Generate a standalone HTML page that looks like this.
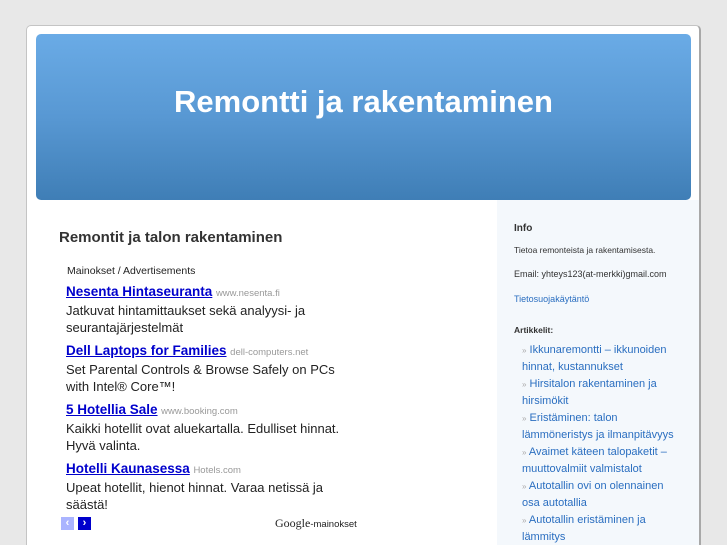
<!DOCTYPE html>
<html><head><meta charset="utf-8"><style>
*{margin:0;padding:0;box-sizing:border-box}
html{width:727px;height:545px;overflow:hidden}
body{width:727px;height:545px;background:#e8e8e8;font-family:"Liberation Sans",sans-serif;overflow:hidden;position:relative}
#wrap{position:absolute;left:26px;top:25px;width:675px;height:520px;background:#fff;border:1px solid #c4c4c4;border-bottom:none;border-right:2px solid #a8a8a8;border-radius:5px 5px 0 0}
#hdr{position:absolute;left:36px;top:34px;width:655px;height:166px;border-radius:5px;background:linear-gradient(#6aabe6,#5898d3 50%,#3f7eb6);color:#fff;text-align:center;font-size:31px;font-weight:bold;line-height:34px}
#hdr span{position:absolute;left:0;right:0;top:51px}
#side{position:absolute;left:497px;top:200px;width:202px;height:345px;background:#f4f8fc}
h2{position:absolute;left:59px;top:229px;font-size:15px;color:#333;font-weight:bold}
.ad{position:absolute;left:66px;width:288px;font-size:13px;line-height:17px;color:#222}
.ad a{color:#00c;font-weight:bold;text-decoration:underline;font-size:13.5px}
.ad small{color:#999;font-size:9.5px;font-weight:normal}
.s{position:absolute;left:514px;font-size:9px;color:#333}
.lst{position:absolute;left:522px;top:342px;width:156px;font-size:11px;line-height:17px;color:#2a6ec0}
.lst b{color:#aaa;font-weight:normal;font-size:8px}
</style></head><body>
<div id="wrap"></div>
<div id="hdr"><span>Remontti ja rakentaminen</span></div>
<div id="side"></div>
<h2>Remontit ja talon rakentaminen</h2>
<div class="ad" style="top:263px;font-size:10.5px;left:67px">Mainokset / Advertisements</div>
<div class="ad" style="top:283px"><a>Nesenta Hintaseuranta</a> <small>www.nesenta.fi</small><br>Jatkuvat hintamittaukset sekä analyysi- ja seurantajärjestelmät</div>
<div class="ad" style="top:342px"><a>Dell Laptops for Families</a> <small>dell-computers.net</small><br>Set Parental Controls &amp; Browse Safely on PCs with Intel® Core™!</div>
<div class="ad" style="top:401px"><a>5 Hotellia Sale</a> <small>www.booking.com</small><br>Kaikki hotellit ovat aluekartalla. Edulliset hinnat. Hyvä valinta.</div>
<div class="ad" style="top:460px"><a>Hotelli Kaunasessa</a> <small>Hotels.com</small><br>Upeat hotellit, hienot hinnat. Varaa netissä ja säästä!</div>
<div style="position:absolute;left:61px;top:517px;width:13px;height:13px;background:#aab4ff;color:#fff;font-size:11px;font-weight:bold;text-align:center;line-height:13px">‹</div>
<div style="position:absolute;left:78px;top:517px;width:13px;height:13px;background:#00c;color:#fff;font-size:11px;font-weight:bold;text-align:center;line-height:13px">›</div>
<div style="position:absolute;left:275px;top:516px;font-size:12px;color:#222;font-family:'Liberation Serif',serif">Google<span style="font-family:'Liberation Sans',sans-serif;font-size:9.5px">-mainokset</span></div>
<div class="s" style="top:223px;font-size:10px;font-weight:bold">Info</div>
<div class="s" style="top:245px;font-size:8.5px">Tietoa remonteista ja rakentamisesta.</div>
<div class="s" style="top:269px">Email: yhteys123(at-merkki)gmail.com</div>
<div class="s" style="top:294px;color:#2a6ec0">Tietosuojakäytäntö</div>
<div class="s" style="top:325px;font-weight:bold;font-size:8.5px">Artikkelit:</div>
<div class="lst">
<div><b>»</b> Ikkunaremontti – ikkunoiden hinnat, kustannukset</div>
<div><b>»</b> Hirsitalon rakentaminen ja hirsimökit</div>
<div><b>»</b> Eristäminen: talon lämmöneristys ja ilmanpitävyys</div>
<div><b>»</b> Avaimet käteen talopaketit – muuttovalmiit valmistalot</div>
<div><b>»</b> Autotallin ovi on olennainen osa autotallia</div>
<div><b>»</b> Autotallin eristäminen ja lämmitys</div>
</div>
</body></html>
